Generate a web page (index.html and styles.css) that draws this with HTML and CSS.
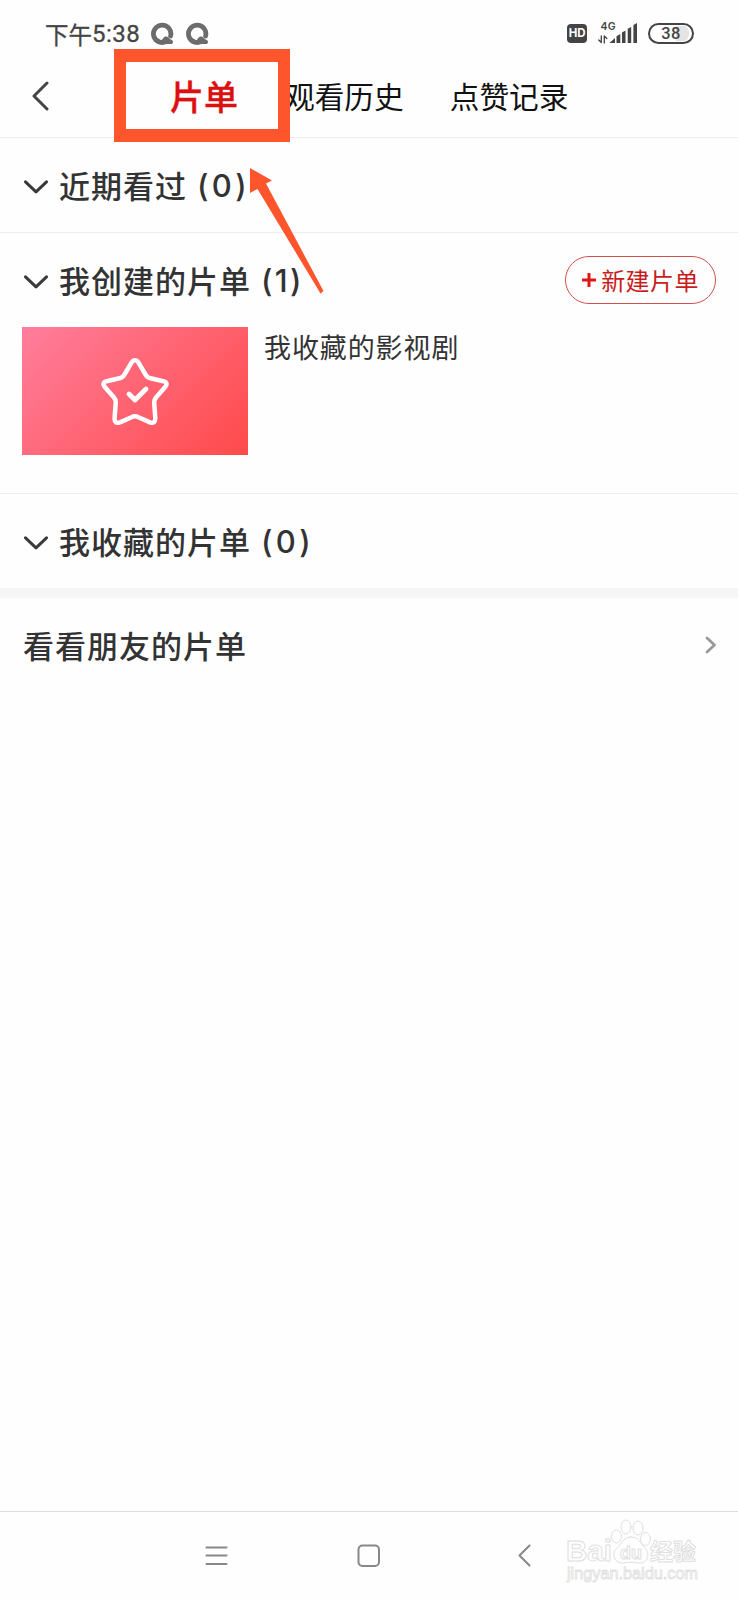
FILE: index.html
```html
<!DOCTYPE html>
<html lang="zh-CN">
<head>
<meta charset="utf-8">
<title>片单</title>
<link rel="stylesheet" href="styles.css">
</head>
<body>
<div class="screen">
  <header class="status">
    <span class="clock">下午<span class="clock-digits">5:38</span></span>
    <svg class="q-icon" viewBox="0 0 23 23"><path class="q-ring" d="M16.5 18.7A8.700 8.700 0 1 1 19.6 14"/><path class="q-tail" d="M9 19.2C10.8 18.6 11 17.4 12.4 16C13.6 14.2 16 14.2 17.2 15.3C18.3 16.4 19 17.6 20.8 17.9C22.6 18.6 22.4 22 20 22H11Z"/></svg>
    <svg class="q-icon q-second" viewBox="0 0 23 23"><path class="q-ring" d="M16.5 18.7A8.700 8.700 0 1 1 19.6 14"/><path class="q-tail" d="M9 19.2C10.8 18.6 11 17.4 12.4 16C13.6 14.2 16 14.2 17.2 15.3C18.3 16.4 19 17.6 20.8 17.9C22.6 18.6 22.4 22 20 22H11Z"/></svg>
    <span class="spacer"></span>
    <span class="hd">HD</span>
    <svg class="signal" viewBox="0 0 40 23">
      <text class="signal-label" x="2.500" y="8" textLength="15">4G</text>
      <path class="signal-arrows" d="M3.3 14V20.5L.8 18M6.3 21V14L8.8 16.5"/>
      <path class="signal-bars" d="M11.500 21L17 16V21ZM18.500 14.3L22.300 12V21H18.500ZM24 10.5L27.500 8.5V21H24ZM29.700 6.8L33.200 5V21H29.700ZM35.400 3L39 1V21H35.400Z"/>
    </svg>
    <span class="battery">38</span>
  </header>
  <nav class="tabs">
    <svg class="back" viewBox="0 0 18 30"><path d="M16 2L3 15L16 28"/></svg>
    <span class="tab tab-active">片单</span>
    <span class="tab">观看历史</span>
    <span class="tab">点赞记录</span>
  </nav>
  <section class="group">
    <div class="group-head">
      <svg class="chevron" viewBox="0 0 24 14"><path d="M1.5 1.8L12 11.8L22.5 1.8"/></svg>
      <h2 class="title">近期看过</h2><span class="count">(0)</span>
    </div>
  </section>
  <section class="group group-created">
    <div class="group-head">
      <svg class="chevron" viewBox="0 0 24 14"><path d="M1.5 1.8L12 11.8L22.5 1.8"/></svg>
      <h2 class="title">我创建的片单</h2><span class="count count-narrow">(1)</span>
      <button class="create"><svg class="plus" viewBox="0 0 14 14"><path d="M7 0V14M0 7H14"/></svg>新建片单</button>
    </div>
    <div class="item">
      <div class="cover">
        <svg class="star" viewBox="0 0 68 68"><path class="star-line" d="M30.8 4.2Q34 .2 37.2 4.2L44.5 16.5Q46 19.5 49.5 20.2L62.5 23.2Q67.4 24.5 64.4 28.7L55 39.5Q53 42 53.2 45L54.3 60Q54.2 66.3 49 64.4L37.5 59.3Q34 57.4 30.5 59.3L19 64.4Q13.2 66.2 13.6 60L14.7 45Q15 42 13 39.5L3.6 28.7Q.6 24.5 5.5 23.2L18.5 20.2Q22 19.5 23.5 16.5Z"/><path class="check" d="M28 36L34 42L45 31"/></svg>
      </div>
      <span class="item-name">我收藏的影视剧</span>
    </div>
  </section>
  <section class="group group-saved">
    <div class="group-head">
      <svg class="chevron" viewBox="0 0 24 14"><path d="M1.5 1.8L12 11.8L22.5 1.8"/></svg>
      <h2 class="title">我收藏的片单</h2><span class="count">(0)</span>
    </div>
  </section>
  <section class="friends">
    <h2 class="title">看看朋友的片单</h2>
    <svg class="more" viewBox="0 0 12 18"><path d="M2 2L9.5 9L2 16"/></svg>
  </section>
  <footer class="system-nav">
    <svg class="nav-icon" viewBox="0 0 24 24"><path d="M2.500 3.5H22.500M2.500 11.500H22.500M2.500 20H22.500"/></svg>
    <svg class="nav-icon" viewBox="0 0 24 24"><rect x="1.500" y="1.500" width="20.500" height="20.500" rx="4"/></svg>
    <svg class="nav-icon" viewBox="0 0 24 24"><path d="M17.500 1.500L7.500 11.500L17.500 21.500"/></svg>
  </footer>
  <svg class="watermark" viewBox="0 0 140 76">
    <text class="wm-brand" x="3" y="43" textLength="46" lengthAdjust="spacingAndGlyphs">Bai</text>
    <g class="wm-paw"><ellipse cx="53.500" cy="18.500" rx="5" ry="6.5"/><ellipse cx="63" cy="9" rx="5" ry="7"/><ellipse cx="75" cy="10" rx="5" ry="7"/><ellipse cx="82.500" cy="21" rx="5" ry="6.5"/><path d="M68 19C60 19 59 26 54 30C48 35 51 46 61 45C66 44 70 44 75 45C86 46 87 35 82 30C77 25 76 19 68 19Z"/></g>
    <text class="wm-du" x="57" y="41" textLength="22" lengthAdjust="spacingAndGlyphs">du</text>
    <text class="wm-cn" x="87" y="42" textLength="46" lengthAdjust="spacingAndGlyphs">经验</text>
    <text class="wm-url" x="4" y="61" textLength="131" lengthAdjust="spacingAndGlyphs">jingyan.baidu.com</text>
  </svg>
  <div class="highlight"></div>
  <svg class="pointer" viewBox="0 0 76 128"><path d="M1 1L23 13.500L17 16.500L74.500 124L71.500 126.500L8.500 22L1 26Z"/></svg>
</div>
</body>
</html>
```

FILE: styles.css
```css
* { box-sizing: border-box; }
body {
  margin: 0;
  background: #fefefe;
  color: #333;
  font-family: "Noto Sans CJK SC", sans-serif;
}
svg { display: block; flex: none; fill: none; stroke-linecap: round; stroke-linejoin: round; }
.screen {
  position: relative;
  display: flex;
  flex-direction: column;
  width: 738px;
  height: 1600px;
  overflow: hidden;
}

/* Status bar */
.status {
  display: flex;
  align-items: center;
  height: 58px;
  padding: 9px 44px 0 45px;
  color: #444;
}
.clock { display: flex; align-items: center; width: 106px; font-size: 23.500px; line-height: 28px; -webkit-text-stroke: .3px; }
.clock-digits { padding-top: 1px; font-family: Roboto, sans-serif; font-size: 24px; letter-spacing: .5px; }
.q-icon { width: 23px; height: 23px; }
.q-second { margin-left: 12px; }
.q-ring { stroke: #6c6c6c; stroke-width: 4.800; }
.q-tail { fill: #6c6c6c; }
.spacer { flex: 1; }
.hd {
  width: 20px;
  height: 19px;
  border-radius: 4px;
  background: #444;
  color: #fff;
  font: bold 11.500px/19px Inter, sans-serif;
  letter-spacing: -.2px;
  text-align: center;
}
.signal { width: 40px; height: 23px; margin: 0 10px 0 11px; }
.signal-label { fill: #444; font: 600 10.500px Inter, sans-serif; }
.signal-arrows { stroke: #444; stroke-width: 1.3; }
.signal-bars { fill: #444; }
.battery {
  width: 46px;
  height: 21px;
  border: 2px solid #444;
  border-radius: 11px;
  background: linear-gradient(90deg, #fefefe 64%, #e4e4e4 64%) content-box;
  padding: 1px 3px;
  color: #444;
  font: 500 16.500px/16px Roboto, sans-serif;
  letter-spacing: .3px;
  text-align: center;
}

/* Tabs */
.tabs {
  display: flex;
  align-items: center;
  height: 80px;
  padding: 0 0 3px 31px;
  border-bottom: 1px solid #eee;
}
.back { width: 18px; height: 30px; margin-right: 121px; stroke: #444; stroke-width: 3; }
.tab { margin-right: 46px; color: #111; font-size: 29.700px; line-height: 44px; white-space: nowrap; }
.tab-active { width: 69px; color: #dc1010; font-size: 34px; font-weight: 500; -webkit-text-stroke: .4px; }

/* Groups */
.group { height: 95px; border-bottom: 1px solid #eee; }
.group-created { height: 261px; }
.group-saved { height: 94px; border-bottom: 0; }
.group-head { display: flex; align-items: center; height: 94px; padding: 0 22px 0 24px; }
.chevron { width: 24px; height: 14px; margin: 3px 11px 0 0; stroke: #3a3a3a; stroke-width: 3; }
.title { margin: 0; font-size: 31px; font-weight: 500; line-height: 44px; letter-spacing: 1px; white-space: nowrap; }
.count { margin-left: 10px; padding-top: 1px; font: 500 31px/42px Inter, sans-serif; letter-spacing: 3.400px; }
.count-narrow { letter-spacing: 2.200px; }
.create {
  display: flex;
  align-items: center;
  justify-content: center;
  width: 151px;
  height: 48px;
  margin: 0 0 0 auto;
  padding: 0;
  border: 1px solid #d05050;
  border-radius: 24px;
  background: none;
  color: #c91d1d;
  font: 24px/36px "Noto Sans CJK SC", sans-serif;
  letter-spacing: .4px;
}
.plus { width: 14px; height: 14px; margin-right: 5px; stroke: #e01515; stroke-width: 3; stroke-linecap: butt; }
.item { display: flex; align-items: flex-start; padding-left: 22px; }
.cover {
  display: flex;
  align-items: center;
  justify-content: center;
  width: 226px;
  height: 128px;
  background: linear-gradient(135deg, #ff7e9c, #ff4a4a);
}
.star { width: 68px; height: 68px; margin-top: 2px; stroke: #fff; }
.star-line { stroke-width: 4.500; }
.check { stroke-width: 4.800; }
.item-name { margin-left: 16px; color: #333; font-size: 27px; line-height: 40px; letter-spacing: .9px; }

/* Friends */
.friends {
  display: flex;
  align-items: center;
  justify-content: space-between;
  height: 106px;
  padding: 0 21px 3px 23px;
  border-top: 10px solid #f6f6f6;
}
.more { width: 12px; height: 18px; stroke: #999; stroke-width: 2.800; }

/* Navigation bar */
.system-nav {
  display: flex;
  align-items: center;
  height: 89px;
  margin-top: auto;
  padding-left: 204px;
  gap: 129px;
  border-top: 1px solid #ddd;
}
.nav-icon { width: 24px; height: 24px; stroke: #888; stroke-width: 2; }
.nav-icon:last-child { margin-left: 2px; }

/* Overlays */
.watermark { position: absolute; left: 563px; top: 1518px; width: 140px; height: 76px; stroke: #dfdfdf; stroke-width: 1; }
.watermark text { fill: #fefefe; }
.wm-brand { font: bold 29px "Liberation Sans", sans-serif; }
.wm-paw { fill: #fefefe; }
.wm-du { font: bold 19px "Liberation Sans", sans-serif; }
.wm-cn { font: bold 23px "Noto Sans CJK SC", sans-serif; }
.wm-url { font: 16px "Liberation Sans", sans-serif; stroke-width: .8; }
.highlight { position: absolute; left: 114px; top: 49px; width: 176px; height: 93px; border: 13px solid #ff552c; border-width: 13px 12px; }
.pointer { position: absolute; left: 249px; top: 167px; width: 76px; height: 128px; fill: #ff552c; }
```
